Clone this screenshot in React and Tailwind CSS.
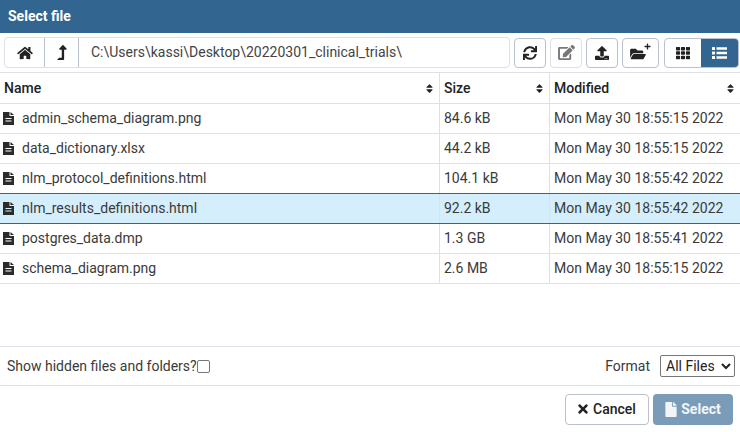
import React from 'react';
import { FaHome, FaLevelUpAlt, FaSync, FaEdit, FaUpload, FaFolderOpen, FaTh, FaFile, FaTimes, FaSort, FaPlus } from 'react-icons/fa';

const files = [
  { name: 'admin_schema_diagram.png', size: '84.6 kB', modified: 'Mon May 30 18:55:15 2022' },
  { name: 'data_dictionary.xlsx', size: '44.2 kB', modified: 'Mon May 30 18:55:15 2022' },
  { name: 'nlm_protocol_definitions.html', size: '104.1 kB', modified: 'Mon May 30 18:55:42 2022' },
  { name: 'nlm_results_definitions.html', size: '92.2 kB', modified: 'Mon May 30 18:55:42 2022', selected: true },
  { name: 'postgres_data.dmp', size: '1.3 GB', modified: 'Mon May 30 18:55:41 2022' },
  { name: 'schema_diagram.png', size: '2.6 MB', modified: 'Mon May 30 18:55:15 2022' },
];

const FileIcon = () => (
  <svg viewBox="0 0 11 13" className="w-[11px] h-[13px] mr-[8px] text-[#2b2b2b]" fill="currentColor">
    <path fillRule="evenodd" d="M0 0 H6.5 V4 H11 V13 H0 Z M2.5 6 V7 H8.5 V6 Z M2.5 8.5 V9.5 H8.5 V8.5 Z" />
    <path d="M7.5 0 L11 3 H7.5 Z" />
  </svg>
);

const ListIcon = () => (
  <svg viewBox="0 0 15 12" className="w-[15px] h-[12px]" fill="currentColor">
    <rect x="0" y="0" width="3" height="3" rx="0.5" />
    <rect x="4.5" y="0.25" width="10.5" height="2.5" />
    <rect x="0" y="4.5" width="3" height="3" rx="0.5" />
    <rect x="4.5" y="4.75" width="10.5" height="2.5" />
    <rect x="0" y="9" width="3" height="3" rx="0.5" />
    <rect x="4.5" y="9.25" width="10.5" height="2.5" />
  </svg>
);

const ToolButton = ({ children, className = '' }) => (
  <button className={`h-[30px] flex items-center justify-center rounded-[4px] border ${className}`}>
    {children}
  </button>
);

const HeaderCell = ({ label, className }) => (
  <div className={`h-[30px] flex items-center justify-between pl-[4px] pr-[5px] font-medium text-[#222222] ${className}`}>
    <span>{label}</span>
    <FaSort className="w-[9px] h-[11px]" />
  </div>
);

const App = () => {
  return (
    <div className="w-[740px] h-[432px] bg-white flex flex-col overflow-hidden text-[14px] text-[#3a3a3a] font-['Roboto',sans-serif]">
      {/* Title bar */}
      <div className="h-[33px] shrink-0 bg-[#326690] flex items-center pl-[8px] text-white font-bold text-[14px]">
        Select file
      </div>

      {/* Toolbar */}
      <div className="h-[39px] shrink-0 flex items-center pl-[4px] pr-[1px] gap-[4px]">
        <div className="w-[507px] h-[31px] flex items-center rounded-[4px] border border-[#dde0e6]">
          <div className="w-[40px] h-full flex items-center justify-center border-r border-[#bac1cd] text-[#222222]">
            <FaHome className="w-[16px] h-[14px]" />
          </div>
          <div className="w-[34px] h-full flex items-center justify-center border-r border-[#bac1cd] text-[#222222]">
            <FaLevelUpAlt className="w-[10px] h-[15px]" />
          </div>
          <span className="pl-[12px] text-[#444444]">C:\Users\kassi\Desktop\20220301_clinical_trials\</span>
        </div>
        <ToolButton className="w-[32px] border-[#bac1cd] text-[#222222]"><FaSync className="w-[14px] h-[14px]" /></ToolButton>
        <ToolButton className="w-[32px] border-[#dde0e6] text-[#777777]"><FaEdit className="w-[17px] h-[15px]" /></ToolButton>
        <ToolButton className="w-[32px] border-[#bac1cd] text-[#222222]"><FaUpload className="w-[14px] h-[14px]" /></ToolButton>
        <ToolButton className="w-[37px] border-[#bac1cd] text-[#222222] relative">
          <FaFolderOpen className="w-[16px] h-[14px] mt-[3px] mr-[5px]" />
          <FaPlus className="absolute top-[4px] right-[7px] w-[7px] h-[7px]" />
        </ToolButton>
        <div className="flex ml-[1px] h-[30px] w-[75px] rounded-[4px] border border-[#bac1cd] overflow-hidden">
          <div className="w-[36px] flex items-center justify-center text-[#222222]">
            <FaTh className="w-[14px] h-[14px]" />
          </div>
          <div className="flex-1 flex items-center justify-center bg-[#326690] text-white">
            <ListIcon />
          </div>
        </div>
      </div>

      {/* File table */}
      <div className="border-t border-[#dde0e6] flex-1">
        <div className="flex border-b border-[#dde0e6]">
          <HeaderCell label="Name" className="w-[440px] border-r border-[#dde0e6]" />
          <HeaderCell label="Size" className="w-[110px] border-r border-[#dde0e6]" />
          <HeaderCell label="Modified" className="flex-1" />
        </div>
        {files.map((file) => (
          <div
            key={file.name}
            className={`flex h-[30px] border-b relative ${file.selected ? 'bg-[#d5eefb] border-[#326690]' : 'border-[#dde0e6]'}`}
          >
            {file.selected && <div className="absolute left-0 right-0 top-[-1px] h-[1px] bg-[#326690]" />}
            <div className="w-[440px] flex items-center pl-[3px] border-r border-[#dde0e6]">
              <FileIcon />
              <span>{file.name}</span>
            </div>
            <div className="w-[110px] flex items-center pl-[4px] border-r border-[#dde0e6]">
              {file.size}
            </div>
            <div className="flex-1 flex items-center pl-[4px]">{file.modified}</div>
          </div>
        ))}
      </div>

      {/* Options */}
      <div className="h-[38px] shrink-0 border-y border-[#dde0e6] box-content flex items-center justify-between pl-[7px] pr-[5px]">
        <label className="flex items-center">
          Show hidden files and folders?
          <input type="checkbox" className="w-[13px] h-[13px] appearance-none rounded-[2px] border border-[#767676] bg-white" />
        </label>
        <div className="flex items-center gap-[10px]">
          <span>Format</span>
          <select className="w-[75px] h-[22px] rounded-[2px] border border-[#767676] pl-[1px] text-[#222222] bg-white">
            <option>All Files</option>
          </select>
        </div>
      </div>

      {/* Actions */}
      <div className="h-[46px] shrink-0 flex items-center justify-end gap-[4px] pr-[7px]">
        <button className="w-[84px] h-[31px] flex items-center justify-center gap-[5px] rounded-[4px] border border-[#bac1cd] bg-white font-medium text-[#222222]">
          <FaTimes className="w-[10px] h-[14px]" />
          Cancel
        </button>
        <button className="w-[80px] h-[31px] flex items-center justify-center gap-[4px] rounded-[4px] bg-[#7b9cb8] font-bold text-white/90">
          <FaFile className="w-[12px] h-[15px]" />
          Select
        </button>
      </div>
    </div>
  );
};

export default App;
